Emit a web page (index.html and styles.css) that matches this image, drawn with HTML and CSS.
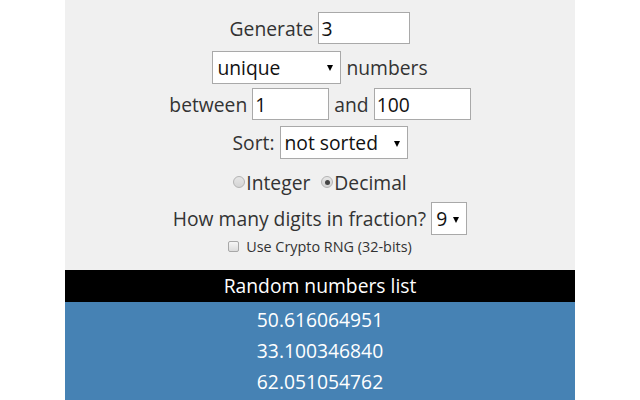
FILE: index.html
```html
<!DOCTYPE html>
<html>
<head>
<meta charset="utf-8">
<link rel="stylesheet" href="styles.css">
</head>
<body>
<div class="page">
  <div class="form">
    <div class="row r1">
      <span>Generate</span>
      <input class="field w-count" type="text" value="3">
    </div>
    <div class="row r2">
      <span class="sel w-unique"><select><option>unique</option></select></span>
      <span>numbers</span>
    </div>
    <div class="row r3">
      <span>between</span>
      <input class="field w-min" type="text" value="1">
      <span>and</span>
      <input class="field w-max" type="text" value="100">
    </div>
    <div class="row r4">
      <span>Sort:</span>
      <span class="sel w-sort"><select><option>not sorted</option></select></span>
    </div>
    <div class="row r5">
      <label class="opt"><input class="radio" type="radio" name="t">Integer</label>
      <label class="opt"><input class="radio" type="radio" name="t" checked>Decimal</label>
    </div>
    <div class="row r6">
      <span>How many digits in fraction?</span>
      <span class="sel w-digits"><select><option>9</option></select></span>
    </div>
    <div class="row r7">
      <label class="check"><input class="box" type="checkbox">Use Crypto RNG (32-bits)</label>
    </div>
  </div>
  <div class="list-head">Random numbers list</div>
  <div class="list">
    <div class="num">50.616064951</div>
    <div class="num">33.100346840</div>
    <div class="num">62.051054762</div>
  </div>
</div>
</body>
</html>
```
FILE: styles.css
```css
html, body {
  margin: 0;
  padding: 0;
  background: #ffffff;
}
body {
  font-family: "Open Sans", "Noto Sans", sans-serif;
  color: #333333;
  font-size: 19.3px;
}
.page {
  width: 510px;
  margin: 0 auto;
  background: #f0f0f0;
  height: 400px;
  overflow: hidden;
}
.form {
  display: flex;
  flex-direction: column;
  align-items: center;
  padding-top: 12px;
  height: 258px;
  box-sizing: border-box;
}
.row {
  display: flex;
  align-items: center;
  justify-content: center;
  gap: 5px;
}
.r1 { height: 32px; }
.r2 { height: 32px; margin-top: 7px; }
.r3 { height: 32px; margin-top: 5px; }
.r4 { height: 33px; margin-top: 6px; }
.r5 { height: 30px; margin-top: 8px; gap: 11px; }
.r6 { height: 33px; margin-top: 5px; gap: 5px; }
.r7 { height: 18px; margin-top: 2px; }
.field {
  box-sizing: border-box;
  height: 32px;
  border: 1px solid #a9a9a9;
  background: #fff;
  font-family: inherit;
  font-size: 19.3px;
  color: #111;
  padding: 0 2px;
  margin: 0;
  outline: none;
}
.w-count { width: 92px; }
.w-min { width: 77px; }
.w-max { width: 97px; }
.sel {
  position: relative;
  display: inline-block;
}
.sel select {
  appearance: none;
  -webkit-appearance: none;
  box-sizing: border-box;
  height: 33px;
  border: 1px solid #a9a9a9;
  background: #fff;
  font-family: inherit;
  font-size: 19.3px;
  color: #111;
  padding: 0 0 0 4px;
  margin: 0;
  border-radius: 0;
  width: 100%;
  outline: none;
}
.sel::after {
  content: "";
  position: absolute;
  right: 8px;
  top: 50%;
  margin-top: -2px;
  border-left: 3.5px solid transparent;
  border-right: 3.5px solid transparent;
  border-top: 6px solid #000;
  pointer-events: none;
}
.w-unique { width: 129px; }
.w-sort { width: 128px; }
.w-digits { width: 36px; }
.opt {
  display: flex;
  align-items: center;
}
.radio {
  appearance: none;
  -webkit-appearance: none;
  width: 12px;
  height: 12px;
  margin: 0 1px 0 0;
  border: 1px solid #b4b4b4;
  border-radius: 50%;
  background: linear-gradient(#e6e6e6, #d4d4d4);
  position: relative;
}
.radio:checked::after {
  content: "";
  position: absolute;
  left: 2.5px;
  top: 2.5px;
  width: 5px;
  height: 5px;
  border-radius: 50%;
  background: #444;
}
.check {
  display: flex;
  align-items: center;
  font-size: 14.4px;
  color: #333;
  gap: 7px;
}
.box {
  appearance: none;
  -webkit-appearance: none;
  width: 11px;
  height: 11px;
  margin: 0;
  border: 1px solid #a8a8a8;
  border-radius: 2px;
  background: linear-gradient(#f6f6f6, #dcdcdc);
}
.list-head {
  margin-top: 12px;
  background: #000;
  color: #fff;
  height: 32px;
  line-height: 32px;
  text-align: center;
  font-size: 19.3px;
}
.list {
  background: #4682b4;
  color: #fff;
  text-align: center;
  padding-top: 2px;
  min-height: 120px;
}
.num {
  height: 31px;
  line-height: 31px;
  font-size: 19.3px;
}
```
